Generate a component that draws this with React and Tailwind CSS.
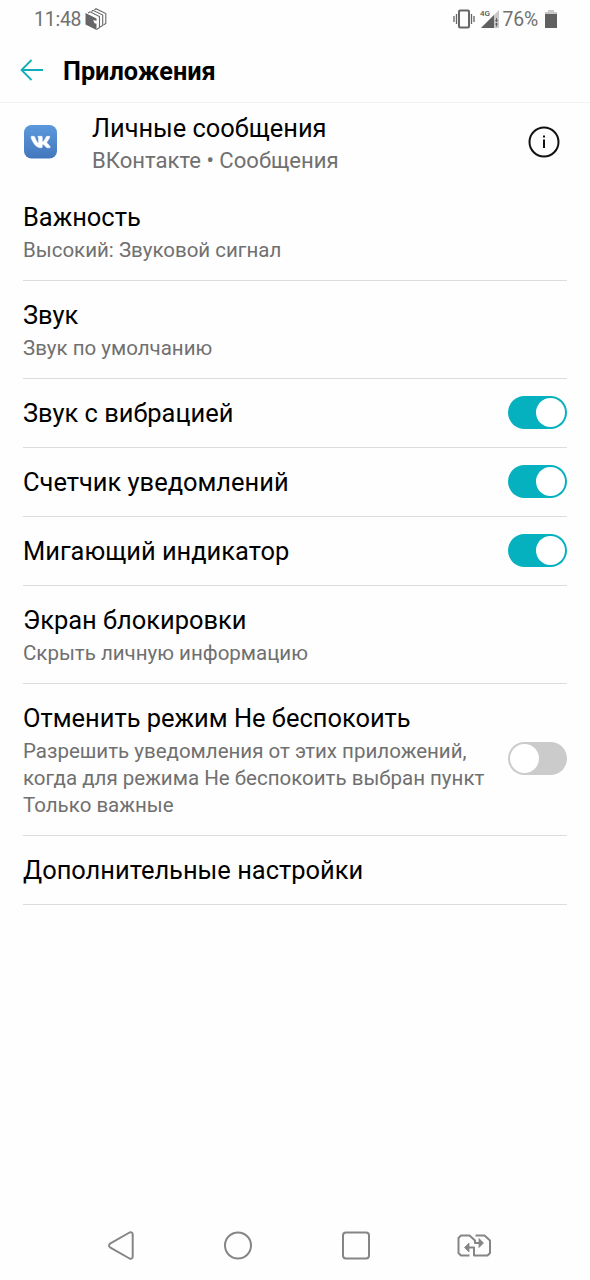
import React from "react"

const settings = [
    { title: "Важность", lines: ["Высокий: Звуковой сигнал"] },
    { title: "Звук", lines: ["Звук по умолчанию"] },
    { title: "Звук с вибрацией", on: true },
    { title: "Счетчик уведомлений", on: true },
    { title: "Мигающий индикатор", on: true },
    { title: "Экран блокировки", lines: ["Скрыть личную информацию"] },
    {
        title: "Отменить режим Не беспокоить",
        lines: [
            "Разрешить уведомления от этих приложений,",
            "когда для режима Не беспокоить выбран пункт",
            "Только важные",
        ],
        on: false,
    },
    { title: "Дополнительные настройки" },
]

const StatusBar = () => (
    <div className="flex h-10 items-center pl-[34px] pr-[33px] text-[19.4px] text-[#707070]">
        <span className="tracking-[-0.2px]">11:48</span>
        <svg className="ml-1 mb-px" width="22" height="23" viewBox="0 0 22 23" fill="none" stroke="#6a6a6a" strokeWidth="1.1">
            <path d="M9.500 2 L11 0.700 L20.800 5.500 V15.500 L18.500 17" />
            <path d="M6.500 3.500 L8 2.300 L17.700 7 V17.500 L15 19" />
            <path d="M3 5 L5 3.800 L14.500 8.500 V19.500 L11.500 21.500" />
            <path d="M0.500 5 L11.500 10.500 V22 L0.500 16.500 Z" fill="#666" stroke="none" />
            <path d="M8.200 12 L12 13 V15.800 L9.500 15.200 Z" fill="#fefefe" stroke="none" />
        </svg>
        <div className="ml-auto flex items-center">
            <svg className="mb-0.5" width="22" height="20" viewBox="0 0 22 20" fill="none" stroke="#666" strokeWidth="1.3">
                <rect x="6" y="1.500" width="10" height="17" rx="1" strokeWidth="2" />
                <path d="M3.500 5 V15 M1 7 V13 M18.500 5 V15 M21 7 V13" />
            </svg>
            <svg className="ml-[5px] mb-0.5" width="20" height="20" viewBox="0 0 20 20">
                <path d="M19 1 V19 H1 Z" fill="#c8c8c8" />
                <path d="M14 6 V19 H1 Z" fill="#606060" />
                <path d="M16.500 9 V12.500 M16.500 14 V17.500" stroke="#606060" />
                <path d="M14.800 11 H18.200 L16.500 13 Z M14.800 15.500 H18.200 L16.500 13.500 Z" fill="#606060" />
                <text x="0" y="7" fontSize="8" fontWeight="500" fill="#555" fontFamily="Roboto, sans-serif">4G</text>
            </svg>
            <span className="ml-[3px] tracking-[-0.2px]">76%</span>
            <svg className="ml-[7px] mb-0.5" width="12" height="18" viewBox="0 0 12 18">
                <path d="M3 0 H9 V2 H12 V4 H0 V2 H3 Z" fill="#c8c8c8" />
                <path d="M0 4 H12 V18 H0 Z" fill="#606060" />
            </svg>
        </div>
    </div>
)

const Header = () => (
    <div className="flex h-[63px] items-center border-b border-[#f3f3f3] pl-5">
        <svg className="mb-0.5" width="24" height="22" viewBox="0 0 24 22" fill="none" stroke="#12adba" strokeWidth="1.800">
            <path d="M23 11 H1.500 M11.500 1 L1.500 11 L11.500 21" />
        </svg>
        <h1 className="ml-[19px] mt-0.5 text-[25.3px] font-bold leading-8 text-black">Приложения</h1>
    </div>
)

const ChannelInfo = () => (
    <div className="flex h-20 items-center pl-6 pr-[30px]">
        <svg className="mb-[3px]" width="33" height="34" viewBox="0 0 33 34">
            <defs>
                <linearGradient id="vk" x1="0" y1="0" x2="0" y2="1">
                    <stop offset="0" stopColor="#5c98dc" />
                    <stop offset="1" stopColor="#4377bd" />
                </linearGradient>
            </defs>
            <rect width="33" height="33.500" rx="7.500" fill="url(#vk)" />
            <path
                transform="translate(2.200 2.200) scale(1.2)"
                d="M19.376 17.123h-1.744c-.66 0-.864-.525-2.05-1.727-1.033-1-1.49-1.135-1.744-1.135-.356 0-.458.102-.458.593v1.575c0 .424-.135.678-1.253.678-1.846 0-3.896-1.118-5.335-3.202C4.624 10.857 4.03 8.57 4.03 8.096c0-.254.102-.491.593-.491h1.744c.44 0 .61.203.78.677.863 2.49 2.303 4.675 2.896 4.675.22 0 .322-.102.322-.66V9.721c-.068-1.186-.695-1.287-.695-1.71 0-.204.17-.407.44-.407h2.744c.373 0 .508.203.508.643v3.473c0 .372.17.508.271.508.22 0 .407-.136.813-.542 1.254-1.406 2.151-3.574 2.151-3.574.119-.254.322-.491.763-.491h1.744c.525 0 .644.27.525.643-.22 1.017-2.354 4.031-2.354 4.031-.186.305-.254.44 0 .78.186.254.796.779 1.203 1.253.745.847 1.32 1.558 1.473 2.05.17.49-.085.744-.576.744z"
                fill="#fff"
                stroke="#fff"
                strokeWidth="0.500"
            />
        </svg>
        <div className="ml-[35px]">
            <div className="text-[25.4px] leading-8 text-black">Личные сообщения</div>
            <div className="pt-px text-[22.1px] leading-[30px] text-[#707070]">ВКонтакте • Сообщения</div>
        </div>
        <svg className="mb-[3px] ml-auto" width="32" height="32" viewBox="0 0 32 32" fill="none" stroke="#111" strokeWidth="2">
            <circle cx="16" cy="16" r="14.500" />
            <path d="M16 13.500 V22 M16 9.500 V11.500" />
        </svg>
    </div>
)

const Toggle = ({ on }) => (
    <div className={`flex h-[33px] w-[59px] shrink-0 items-center rounded-full px-0.5 ${on ? "mb-px justify-end bg-[#06b1bf]" : "mb-[3px] bg-[#cbcbcb]"}`}>
        <div className="size-[29px] rounded-full bg-white" />
    </div>
)

const SettingRow = ({ title, lines = [], on }) => (
    <div className={`flex items-center justify-between border-b border-[#dcdcdc] pt-[17px] ${lines.length ? "pb-4" : "pb-[17px]"}`}>
        <div className="pt-px">
            <div className="text-[25.45px] leading-8 text-black">{title}</div>
            <div className={lines.length ? "pt-1 text-[20.5px] leading-[27px] text-[#707070]" : "pt-px"}>
                {lines.map((line) => (
                    <div key={line} className="whitespace-nowrap">{line}</div>
                ))}
            </div>
        </div>
        {on !== undefined && <Toggle on={on} />}
    </div>
)

const NavBar = () => (
    <div className="mt-auto flex h-[70px] items-center justify-between pl-[107px] pr-[98px]">
        <svg width="28" height="30" viewBox="0 0 28 30" fill="none" stroke="#858585" strokeWidth="2" strokeLinejoin="round">
            <path d="M3 13.700 Q1 15.500 3 17.300 L22.500 28.500 Q25.500 29.500 25.700 26.500 V4.500 Q25.500 1.500 22.500 2.500 Z" />
        </svg>
        <svg className="ml-0.5" width="30" height="30" viewBox="0 0 30 30" fill="none" stroke="#858585" strokeWidth="2">
            <circle cx="15" cy="15.500" r="13" />
        </svg>
        <svg className="ml-px" width="30" height="30" viewBox="0 0 30 30" fill="none" stroke="#858585" strokeWidth="2">
            <rect x="2" y="2.500" width="26" height="26" rx="3" />
        </svg>
        <svg width="35" height="24" viewBox="0 0 35 24" fill="none" stroke="#858585" strokeWidth="2" strokeLinejoin="round">
            <path d="M12.500 22.500 H4 L1.500 20 V5 L4 2.500 H12.500 L18 7.500 V10 H24" />
            <path d="M18.500 2.500 H27.500 L33 7.500 V20 L30.500 22.500 H17 V14.500 H10" />
            <path d="M22 5.500 L26.500 10 L22 14.500 Z M12 10 L7.500 14.500 L12 19 Z" fill="#858585" strokeWidth="0.800" />
        </svg>
    </div>
)

const App = () => (
    <div className="flex min-h-screen w-full flex-col bg-[#fefefe] font-[Roboto,sans-serif]">
        <StatusBar />
        <Header />
        <ChannelInfo />
        <div className="px-[23px]">
            {settings.map((item) => (
                <SettingRow key={item.title} {...item} />
            ))}
        </div>
        <NavBar />
    </div>
)

export default App
